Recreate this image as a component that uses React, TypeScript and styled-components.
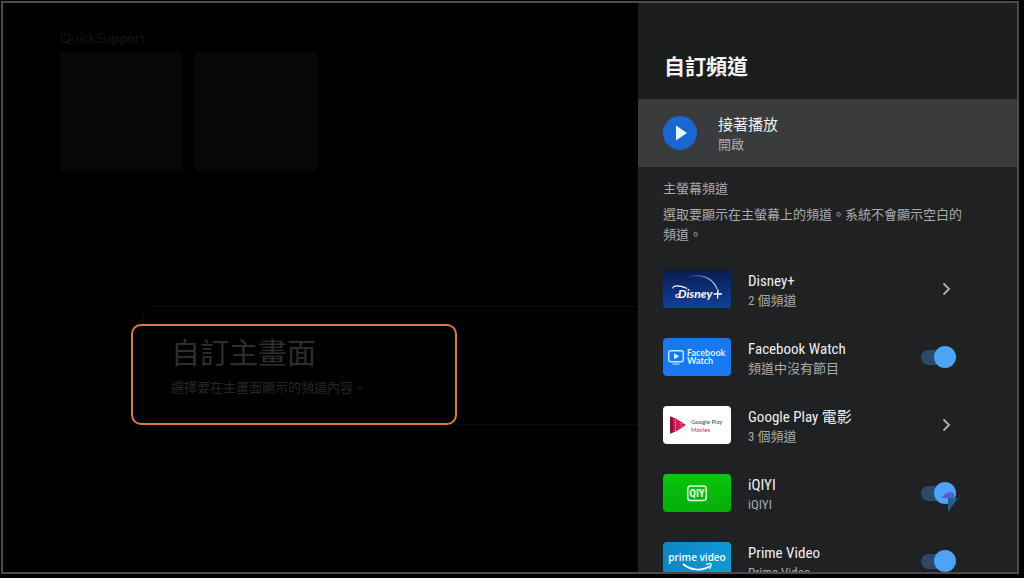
import React from "react";
import styled, { createGlobalStyle } from "styled-components";

const GlobalStyle = createGlobalStyle`
  * { box-sizing: border-box; }
  body {
    margin: 0;
    background: #000;
    font-family: "Roboto Condensed", Roboto, "Noto Sans CJK TC", sans-serif;
  }
  h1, h2, p { margin: 0; font-weight: 400; }
`;

const Page = styled.div`
  height: 100vh;
  padding: 1px 5px 4px 1px;
`;

const Screen = styled.div`
  position: relative;
  display: flex;
  height: 100%;
  overflow: hidden;
  border: 2px solid #4c4b4c;
`;

const Home = styled.main`
  flex: 1;
  min-width: 0;
  padding: 25px 0 0 57px;
`;

const ShelfTitle = styled.h2`
  font: 400 14px/20px Lato, sans-serif;
  color: #141414;
`;

const Shelf = styled.div`
  display: flex;
  gap: 13px;
  margin-top: 3px;
`;

const Tile = styled.div`
  width: 122px;
  height: 120px;
  border-radius: 4px;
  background: #070707;
`;

const PromoCard = styled.section`
  position: relative;
  margin: 135px 0 0 82px;
  height: 119px;
  padding: 22px 0 0 28px;
  border: 1px solid #0b0b0b;
  border-right: 0;
  border-radius: 12px 0 0 12px;
  color: #2e2e2e;
`;

const PromoTitle = styled.h1`
  font-size: 29px;
  line-height: 44px;
  font-family: "Noto Sans CJK TC", sans-serif;
`;

const PromoText = styled.p`
  margin-top: 5px;
  font-size: 13px;
  line-height: 20px;
  color: #262626;
`;

const FocusRing = styled.div`
  position: absolute;
  left: -12px;
  top: 17px;
  width: 326px;
  height: 101px;
  border: 2px solid #dc7b48;
  border-radius: 10px;
`;

const Panel = styled.aside`
  flex: 0 0 379px;
  background: #202123;
  color: #a9aaab;
  font-size: 13px;
  line-height: 20px;
`;

const PanelHeader = styled.header`
  display: flex;
  align-items: center;
  height: 96px;
  padding: 32px 26px 0;
  background: #1c1e1e;
  color: #f4f4f4;
`;

const PanelTitle = styled.h2`
  font-size: 21px;
  line-height: 32px;
  && { font-weight: 700; }
`;

const rowStyles = `
  display: flex;
  align-items: center;
  width: 100%;
  height: 68px;
  border: 0;
  color: inherit;
  font: inherit;
  text-align: left;
`;

const RowButton = styled.button<{ $selected?: boolean }>`
  ${rowStyles}
  gap: ${(p) => (p.$selected ? 21 : 17)}px;
  padding: 0 62px 0 25px;
  background: ${(p) => (p.$selected ? "#3a3b3d" : "transparent")};
`;

const RowLabel = styled.label`
  ${rowStyles}
  gap: 17px;
  padding: 0 62px 0 25px;
`;

const RowText = styled.span`
  display: flex;
  flex: 1;
  flex-direction: column;
  padding-top: 4px;
`;

const RowTitle = styled.span`
  font-size: 15px;
  line-height: 20px;
  color: #f0f0f0;
`;

const Intro = styled.section`
  display: flex;
  flex-direction: column;
  gap: 6px;
  padding: 12px 54px 10px 25px;
`;

const Switch = styled.input`
  appearance: none;
  position: relative;
  width: 32px;
  height: 15px;
  margin: 0 2px 0 0;
  border-radius: 8px;
  background: #2c4a68;
  &::before {
    content: "";
    position: absolute;
    top: -4px;
    right: -3px;
    width: 22px;
    height: 22px;
    border-radius: 50%;
    background: #4da3f8;
  }
`;

const Thumb = styled.svg`
  flex: none;
  display: block;
  width: 68px;
  height: 38px;
  border-radius: 4px;
`;

const Chevron = styled.svg`
  width: 18px;
  height: 18px;
`;

const Watermark = styled.svg`
  position: absolute;
  right: 54px;
  bottom: 58px;
  width: 22px;
  height: 24px;
`;

const DisneyArt = () => (
  <Thumb viewBox="0 0 68 38" aria-hidden="true">
    <defs>
      <linearGradient id="disney" x1="0" y1="0" x2="0" y2="1">
        <stop offset="0" stopColor="#0a1c50" />
        <stop offset="1" stopColor="#10409a" />
      </linearGradient>
      <linearGradient id="arc" x1="0" y1="0" x2="1" y2="0">
        <stop offset="0" stopColor="#5fb4e8" stopOpacity="0.1" />
        <stop offset="1" stopColor="#a8dcf8" />
      </linearGradient>
    </defs>
    <rect width="68" height="38" fill="url(#disney)" />
    <path d="M25 7C38 3 50 8 54 19" fill="none" stroke="url(#arc)" strokeWidth="1.2" />
    <path d="M10 18.500C9 15 18 15 24 18.500" fill="none" stroke="#fff" strokeWidth="1.200" />
    <path d="M17 24C12 24 11 27.500 16 27.500" fill="none" stroke="#fff" strokeWidth="1.100" />
    <text x="15" y="28" fill="#fff" fontFamily="Lato" fontStyle="italic" fontWeight="700" fontSize="12">Disney</text>
    <path d="M50.500 24H59M55 19.500L54.500 28.500" stroke="#fff" strokeWidth="1.400" />
  </Thumb>
);

const FacebookArt = () => (
  <Thumb viewBox="0 0 68 38" aria-hidden="true">
    <rect width="68" height="38" fill="#1977f0" />
    <rect x="5.700" y="12.700" width="14.600" height="11" rx="2" fill="none" stroke="#b8f0ff" strokeWidth="1.400" />
    <path d="M11 15.300L16.200 18.200L11 21.200Z" fill="#d8f8ff" />
    <path d="M9.500 26H16.500" stroke="#b8f0ff" strokeWidth="1.200" />
    <g fill="#d8f6ff" fontFamily="Lato" fontWeight="700" fontSize="9">
      <text x="24" y="18">Facebook</text>
      <text x="24" y="26">Watch</text>
    </g>
  </Thumb>
);

const PlayMoviesArt = () => (
  <Thumb viewBox="0 0 68 38" aria-hidden="true">
    <rect width="68" height="38" fill="#fff" />
    <path d="M7 10.500L13 12.500L23 19L13 25.500L7 27.500Z" fill="#d81b52" />
    <path d="M7 10.500L10 11.500V26.500L7 27.500Z" fill="#8c1238" />
    <path d="M12.500 13.500V25M18.500 17V22.500" stroke="#fbb8cc" strokeWidth="1" strokeDasharray="1.300 1.300" />
    <g fontFamily="Lato" fontSize="6">
      <text x="28" y="18" fill="#444">Google Play</text>
      <text x="28" y="26" fill="#d0205c">Movies</text>
    </g>
  </Thumb>
);

const IqiyiArt = () => (
  <Thumb viewBox="0 0 68 38" aria-hidden="true">
    <defs>
      <linearGradient id="iqiyi" x1="0" y1="0" x2="0" y2="1">
        <stop offset="0" stopColor="#08c80c" />
        <stop offset="1" stopColor="#04ac08" />
      </linearGradient>
    </defs>
    <rect width="68" height="38" fill="url(#iqiyi)" />
    <rect x="24.700" y="12" width="18.600" height="14.500" rx="3" fill="none" stroke="#d9ffd9" strokeWidth="1.600" />
    <text x="34" y="23" textAnchor="middle" fill="#e6ffe6" fontFamily="Roboto Condensed" fontWeight="700" fontSize="11">QIY</text>
  </Thumb>
);

const PrimeArt = () => (
  <Thumb viewBox="0 0 68 38" aria-hidden="true">
    <defs>
      <linearGradient id="prime" x1="0" y1="0" x2="1" y2="0">
        <stop offset="0" stopColor="#0d86bf" />
        <stop offset="1" stopColor="#1099d6" />
      </linearGradient>
    </defs>
    <rect width="68" height="38" fill="url(#prime)" />
    <text x="34" y="19" textAnchor="middle" fill="#fff" fontFamily="Open Sans" fontWeight="600" fontSize="10">prime video</text>
    <path d="M20 22C28 29 40 29 47 24" fill="none" stroke="#fff" strokeWidth="1.700" />
    <path d="M43 22.300C46 21.500 48 21.500 48.300 22C48.500 23.500 47.500 25.500 46.500 27" fill="none" stroke="#fff" strokeWidth="1.200" />
  </Thumb>
);

type Channel = { name: string; detail: string; art: React.ReactNode; toggle?: boolean };

const channels: Channel[] = [
  { name: "Disney+", detail: "2 個頻道", art: <DisneyArt /> },
  { name: "Facebook Watch", detail: "頻道中沒有節目", art: <FacebookArt />, toggle: true },
  { name: "Google Play 電影", detail: "3 個頻道", art: <PlayMoviesArt /> },
  { name: "iQIYI", detail: "iQIYI", art: <IqiyiArt />, toggle: true },
  { name: "Prime Video", detail: "Prime Video", art: <PrimeArt />, toggle: true },
];

const ChannelRow = ({ name, detail, art, toggle }: Channel) => {
  const text = (
    <RowText>
      <RowTitle>{name}</RowTitle>
      <span>{detail}</span>
    </RowText>
  );
  if (toggle) {
    return (
      <RowLabel>
        {art}
        {text}
        <Switch type="checkbox" role="switch" defaultChecked />
      </RowLabel>
    );
  }
  return (
    <RowButton type="button">
      {art}
      {text}
      <Chevron viewBox="0 0 18 18" aria-hidden="true">
        <path d="M6.500 3.500L12 9L6.500 14.500" fill="none" stroke="#a8a9aa" strokeWidth="2" />
      </Chevron>
    </RowButton>
  );
};

export default function App() {
  return (
    <>
      <GlobalStyle />
      <Page>
        <Screen>
          <Home>
            <ShelfTitle>QuickSupport</ShelfTitle>
            <Shelf>
              <Tile />
              <Tile />
            </Shelf>
            <PromoCard>
              <PromoTitle>自訂主畫面</PromoTitle>
              <PromoText>選擇要在主畫面顯示的頻道內容。</PromoText>
              <FocusRing />
            </PromoCard>
          </Home>
          <Panel>
            <PanelHeader>
              <PanelTitle>自訂頻道</PanelTitle>
            </PanelHeader>
            <RowButton type="button" $selected>
              <svg width="34" height="34" viewBox="0 0 34 34" aria-hidden="true">
                <circle cx="17" cy="17" r="17" fill="#1b67d2" />
                <path d="M13 9.500L24 17L13 24.500Z" fill="#e6f4ff" />
              </svg>
              <RowText>
                <RowTitle>接著播放</RowTitle>
                <span>開啟</span>
              </RowText>
            </RowButton>
            <Intro>
              <p>主螢幕頻道</p>
              <p>選取要顯示在主螢幕上的頻道。系統不會顯示空白的頻道。</p>
            </Intro>
            {channels.map((c) => (
              <ChannelRow key={c.name} {...c} />
            ))}
          </Panel>
          <Watermark viewBox="0 0 22 24" aria-hidden="true">
            <path d="M1 8C4 2 9 1 13 3V8Z" fill="#5560cc" />
            <path d="M7 8H17L7 22Z" fill="#1f5f8c" />
            <path d="M17 3C19 5 19 8 16 12" fill="none" stroke="#33204a" strokeWidth="1.300" />
          </Watermark>
        </Screen>
      </Page>
    </>
  );
}
